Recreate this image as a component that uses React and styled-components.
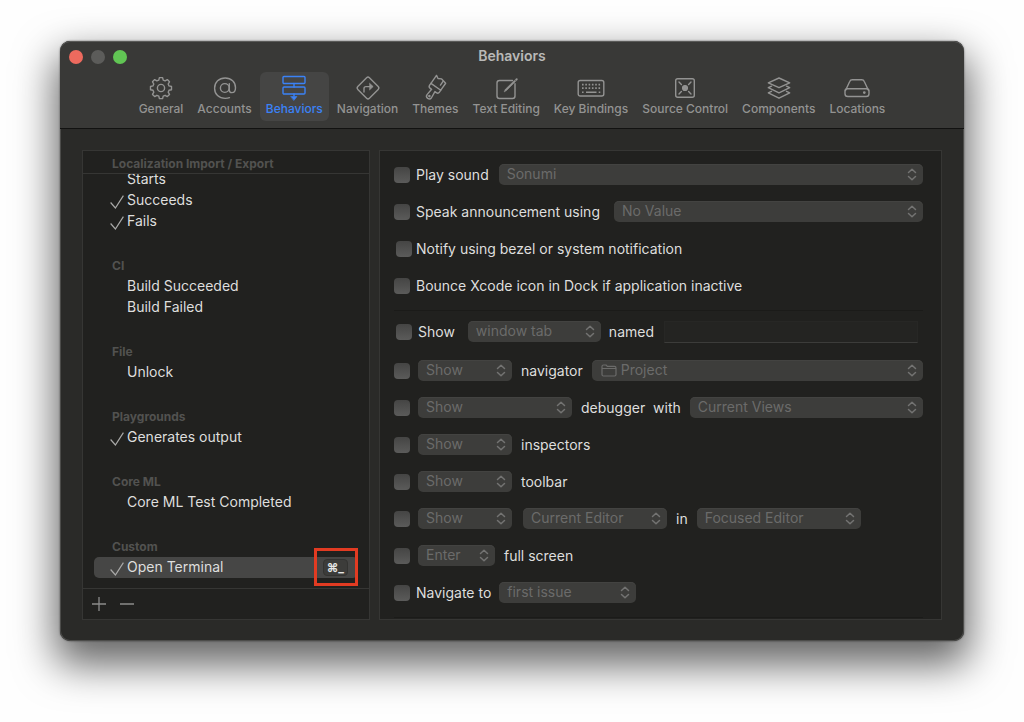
import React, { useState } from "react";
import styled, { createGlobalStyle, css } from "styled-components";

const GlobalStyle = createGlobalStyle`
  *, *::before, *::after {
    box-sizing: border-box;
  }

  body {
    margin: 0;
    background: #fefefe;
    font-family: Inter, "Liberation Sans", sans-serif;
    font-size: 14px;
  }

  button, select, input {
    font: inherit;
  }
`;

// Window
const Desktop = styled.div`
  min-height: 100vh;
  padding: 41px 60px 80px;
`;

const Window = styled.div`
  background: #2a2a28;
  border-radius: 10px;
  overflow: hidden;
  box-shadow:
    inset 0 0 0 1px #4c4c4a,
    0 0 2px rgba(0, 0, 0, 0.6),
    0 19px 40px 5px rgba(0, 0, 0, 0.6);
`;

const TitleArea = styled.header`
  background: #393937;
  border-bottom: 1px solid #121211;
  box-shadow: inset 0 1px 0 #5a5a58;
  border-radius: 10px 10px 0 0;
  padding-bottom: 7px;
`;

const TitleBar = styled.div`
  display: grid;
  grid-template-columns: 80px 1fr 80px;
  align-items: center;
  height: 31px;
`;

const Lights = styled.div`
  display: flex;
  gap: 8px;
  padding-left: 9px;
`;

const Light = styled.button`
  width: 14px;
  height: 14px;
  padding: 0;
  border: 0;
  border-radius: 50%;
  background: ${(props) => props.$color};
`;

const Title = styled.h1`
  margin: 0;
  padding-bottom: 2px;
  font-size: 14px;
  font-weight: 600;
  text-align: center;
  color: #b9b9b8;
`;

const Toolbar = styled.nav`
  display: flex;
  justify-content: center;
  gap: 2px;
`;

const Tab = styled.button`
  display: flex;
  flex-direction: column;
  align-items: center;
  height: 49px;
  padding: 2px 6px 3px;
  border: 0;
  border-radius: 6px;
  background: ${(props) => (props.$active ? "#454544" : "transparent")};
  color: ${(props) => (props.$active ? "#3b82f6" : "#939392")};
  font-size: 12px;
  font-weight: 500;
  line-height: 14px;
  white-space: nowrap;

  svg {
    width: 28px;
    height: 28px;
    fill: none;
    stroke: currentColor;
    stroke-width: 1.4;
    stroke-linecap: round;
    stroke-linejoin: round;
  }
`;

const Content = styled.main`
  display: flex;
  gap: 9px;
  padding: 21px 22px;
`;

// Event list
const panel = css`
  background: #21211f;
  border: 1px solid #363634;
`;

const Sidebar = styled.aside`
  ${panel}
  display: flex;
  flex-direction: column;
  flex: 0 0 288px;
`;

const StickyHeading = styled.h2`
  margin: 0;
  padding: 5px 0 1px 29px;
  border-bottom: 1px solid #363634;
  color: #525250;
  font-size: 12px;
  font-weight: 700;
  line-height: 16px;
`;

const EventList = styled.div`
  flex: 1;
  overflow: hidden;
  padding: 0 11px 10px;
`;

const Scrolled = styled.div`
  margin-top: -5px;
`;

const GroupHeading = styled.h2`
  margin: 0;
  padding: 26px 0 2px 18px;
  color: #525250;
  font-size: 12px;
  font-weight: 700;
  line-height: 16px;
`;

const EventRow = styled.div`
  position: relative;
  display: grid;
  grid-template-columns: 14px 1fr auto;
  column-gap: 3px;
  align-items: center;
  height: 21px;
  padding: 0 10px 0 16px;
  border-radius: 5px;
  background: ${(props) => (props.$selected ? "#464645" : "transparent")};
  color: #dededd;

  svg {
    width: 14px;
    height: 14px;
    margin-top: 2px;
    fill: none;
    stroke: #a9a9a8;
    stroke-width: 1.2;
  }
`;

const EventName = styled.span`
  grid-column: 2;
  padding-bottom: 2px;
  line-height: 19px;
`;

const Shortcut = styled.kbd`
  padding: 0 3px;
  border: 1px solid #333331;
  border-radius: 4px;
  background: #3c3c3a;
  color: #e6e6e5;
  font-family: Inter, "DejaVu Sans", sans-serif;
  font-size: 12px;
  font-weight: 700;
  line-height: 15px;
`;

const Highlight = styled.div`
  position: absolute;
  top: -9px;
  right: 0;
  width: 44px;
  height: 38px;
  border: 3px solid #e23b22;
`;

const SidebarFooter = styled.div`
  display: flex;
  gap: 12px;
  height: 31px;
  padding: 7px 8px;
  border-top: 1px solid #363634;
`;

const IconButton = styled.button`
  width: 16px;
  height: 16px;
  padding: 0;
  border: 0;
  background: none;
  color: #8c8c8b;

  svg {
    display: block;
    stroke: currentColor;
    stroke-width: 1.3;
  }
`;

// Actions
const Actions = styled.section`
  ${panel}
  flex: 1;
  min-width: 0;
  padding: 5px 18px 1px 14px;
`;

const Row = styled.div`
  display: flex;
  align-items: center;
  height: ${(props) => (props.$tall ? 41 : 37)}px;
  gap: ${(props) => props.$gap || 8}px;
  color: #dededd;
  white-space: nowrap;
`;

const CheckLabel = styled.label`
  display: flex;
  align-items: center;
  gap: ${(props) => (props.$wide ? 6 : 4)}px;
`;

const CheckSlot = styled.span`
  display: flex;
  justify-content: ${(props) => (props.$inset ? "flex-end" : "flex-start")};
  width: 18px;
`;

const Words = styled.span`
  padding: 0 ${(props) => (props.$spaced ? 3 : 0)}px 1px;
  word-break: keep-all;
`;

const Checkbox = styled.input`
  appearance: none;
  width: 16px;
  height: 16px;
  margin: 1px 0 0;
  border-radius: 4px;
  background: linear-gradient(#454544, #5b5b5a);

  &:checked {
    background: #3b82f6;
  }
`;

const Rule = styled.hr`
  margin: 6px 0 0;
  border: 0;
  border-top: 1px solid #1b1b19;
`;

const SelectBox = styled.span`
  position: relative;
  display: flex;
  flex: ${(props) => (props.$width ? `0 0 ${props.$width}px` : "1")};
  margin-left: ${(props) => props.$before || 0}px;
  color: #6b6b6a;

  svg {
    position: absolute;
    top: 4px;
    right: 6px;
    width: 10px;
    height: 13px;
    fill: none;
    stroke: #737372;
    stroke-width: 1.5;
    stroke-linecap: round;
    stroke-linejoin: round;
    pointer-events: none;
  }

  svg.leading {
    top: 4px;
    left: 9px;
    right: auto;
    width: 16px;
    height: 13px;
    stroke: #6b6b6a;
    stroke-width: 1.2;
  }
`;

const Select = styled.select`
  appearance: none;
  width: 100%;
  height: 21px;
  padding: 0 20px 2px ${(props) => (props.$icon ? 29 : 8)}px;
  border: 0;
  border-radius: 5px;
  background: #3d3d3b;
  box-shadow: inset 0 1px 0 #434341;
  color: inherit;
  opacity: 1;
`;

const NameField = styled.input`
  flex: 1;
  min-width: 0;
  height: 22px;
  margin: 0 5px 0 2px;
  border: 1px solid #272725;
  border-bottom-color: #3c3c3a;
  background: #242422;
  color: #dededd;
`;

const icons = {
  General: (
    <>
      <path d="M12.4 3.6h3.2l.6 2.5 1.9.8 2.2-1.3 2.2 2.2-1.3 2.2.8 1.9 2.5.6v3.2l-2.5.6-.8 1.9 1.3 2.2-2.2 2.2-2.2-1.3-1.9.8-.6 2.5h-3.2l-.6-2.5-1.9-.8-2.2 1.3-2.2-2.2 1.3-2.2-.8-1.9-2.5-.6v-3.2l2.5-.6.8-1.9-1.3-2.2 2.2-2.2 2.2 1.3 1.9-.8z" />
      <circle cx="14" cy="14" r="3.6" />
    </>
  ),
  Accounts: (
    <>
      <circle cx="13.8" cy="14" r="4.4" />
      <path d="M18.3 9.6v6.3c0 1.8.9 2.7 2.5 2.7 2.2 0 3.7-1.9 3.7-4.9 0-5.7-4.2-9.7-10.3-9.7C8 4 3.6 8.2 3.6 14.2c0 6.1 4.3 10.2 10.6 10.2 1.7 0 3.1-.2 4.3-.7" />
    </>
  ),
  Behaviors: (
    <>
      <rect x="3" y="2.500" width="22" height="7" rx="1" />
      <rect x="3" y="13" width="22" height="7" rx="1" />
      <path d="M14 9.500V13M14 20v2" />
      <path d="M11 22.500h6l-3 3.800z" fill="currentColor" strokeWidth="0.6" />
    </>
  ),
  Navigation: (
    <>
      <rect x="5.8" y="5.8" width="16.4" height="16.4" rx="2" transform="rotate(45 14 14)" />
      <path d="M10 18v-3.500c0-1.200.7-1.900 1.900-1.900H17" />
      <path d="M15.800 9.400l3.400 3.200-3.400 3.200z" fill="currentColor" strokeWidth="0.6" />
    </>
  ),
  Themes: (
    <g transform="rotate(35 14 14)">
      <path d="M8 12.500V2.800l3 1.700L14 2.800l6 1.200v8.500z" />
      <path d="M8 12.500v2.300c0 1.500 1 2.200 2.300 2.200h1.700l-.7 7c0 3.600 5.400 3.600 5.400 0l-.7-7h1.700c1.300 0 2.300-.7 2.300-2.200v-2.300" />
      <path d="M16.800 4v4.500" />
      <circle cx="14" cy="23.800" r=".6" />
    </g>
  ),
  "Text Editing": (
    <>
      <path d="M20.500 6.500H7.500C6 6.500 5 7.500 5 9v13c0 1.500 1 2.500 2.500 2.500h13c1.500 0 2.500-1 2.500-2.500V9.800" />
      <path d="M12.300 17.600l1.100-2.300L22.600 6.200l1.100 1.100-9.200 9.200z" fill="currentColor" strokeWidth="0.6" />
      <path d="M24.200 5.700l.5-.5" strokeWidth="2" />
    </>
  ),
  "Key Bindings": (
    <>
      <rect x="1.2" y="6.500" width="25.6" height="15.5" rx="2" />
      <path d="M5 10.600h18.500M5 14.200h18.500" strokeWidth="1.8" strokeDasharray="1.6 1.7" strokeLinecap="butt" />
      <path d="M5 18.200h1.600M9 18.200h10.500M21.700 18.200h1.600" strokeWidth="1.6" strokeLinecap="butt" />
    </>
  ),
  "Source Control": (
    <>
      <rect x="4.7" y="4.7" width="18.6" height="18.6" rx="2" />
      <circle cx="14" cy="14" r="2.4" fill="currentColor" />
      <path d="M8 8l2.400 2.400M20 8l-2.400 2.400M8 20l2.400-2.400M20 20l-2.400-2.400" />
    </>
  ),
  Components: (
    <>
      <path d="M14 4l10.700 4.800L14 13.700 3.300 8.800z" />
      <path d="M6.500 12.200l-3.200 1.500L14 18.800l10.700-5.100-3.200-1.500" />
      <path d="M6.500 17.300l-3.200 1.500L14 24.200l10.700-5.400-3.200-1.500" />
    </>
  ),
  Locations: (
    <>
      <path d="M2.500 16.500L6.600 7.700c.5-1.200 1.300-1.900 2.700-1.900h9.400c1.400 0 2.200.7 2.700 1.900l4.100 8.800" />
      <path d="M4.600 14.700h18.800c1.500 0 2.600 1 2.600 2.400v2.600c0 1.700-1.100 2.800-2.800 2.800H4.800C3.100 22.500 2 21.400 2 19.700v-2.600c0-1.400 1.100-2.400 2.600-2.400z" />
      <circle cx="21.300" cy="18.600" r=".7" fill="currentColor" />
    </>
  ),
};

const groups = [
  {
    items: [
      { name: "Starts" },
      { name: "Succeeds", checked: true },
      { name: "Fails", checked: true },
    ],
  },
  { title: "CI", items: [{ name: "Build Succeeded" }, { name: "Build Failed" }] },
  { title: "File", items: [{ name: "Unlock" }] },
  { title: "Playgrounds", items: [{ name: "Generates output", checked: true }] },
  { title: "Core ML", items: [{ name: "Core ML Test Completed" }] },
  {
    title: "Custom",
    items: [{ name: "Open Terminal", checked: true, shortcut: "⌘_" }],
  },
];

function Check({ label, inset, wide, children }) {
  return (
    <CheckLabel $wide={wide}>
      <CheckSlot $inset={inset}>
        <Checkbox type="checkbox" aria-label={label} />
      </CheckSlot>
      {children && <Words>{children}</Words>}
    </CheckLabel>
  );
}

function Popup({ label, value, width, before, folder }) {
  return (
    <SelectBox $width={width} $before={before}>
      {folder && (
        <svg className="leading" viewBox="0 0 16 13">
          <path d="M1 4.500h14M1 10.500v-8c0-1 .5-1.500 1.500-1.500H5l1.300 1.400h7.200c1 0 1.500.5 1.500 1.500v6.600c0 1-.5 1.500-1.500 1.500h-11c-1 0-1.500-.5-1.500-1.500z" />
        </svg>
      )}
      <Select aria-label={label} $icon={folder} disabled>
        <option>{value}</option>
      </Select>
      <svg viewBox="0 0 10 13">
        <path d="M1.500 4.500L5 1.200l3.500 3.300M1.500 8.500L5 11.800l3.500-3.300" />
      </svg>
    </SelectBox>
  );
}

function App() {
  const [active, setActive] = useState("Behaviors");

  return (
    <>
      <GlobalStyle />
      <Desktop>
        <Window>
          <TitleArea>
            <TitleBar>
              <Lights>
                <Light $color="#ed6a5e" aria-label="Close" />
                <Light $color="#5c5c5a" aria-label="Minimize" />
                <Light $color="#61c554" aria-label="Zoom" />
              </Lights>
              <Title>Behaviors</Title>
            </TitleBar>
            <Toolbar>
              {Object.keys(icons).map((name) => (
                <Tab
                  key={name}
                  $active={name === active}
                  onClick={() => setActive(name)}
                >
                  <svg viewBox="0 0 28 28">{icons[name]}</svg>
                  {name}
                </Tab>
              ))}
            </Toolbar>
          </TitleArea>

          <Content>
            <Sidebar>
              <StickyHeading>Localization Import / Export</StickyHeading>
              <EventList>
                <Scrolled>
                  {groups.map((group, index) => (
                    <div key={index}>
                      {group.title && <GroupHeading>{group.title}</GroupHeading>}
                      {group.items.map((item) => (
                        <EventRow key={item.name} $selected={!!item.shortcut}>
                          {item.checked && (
                            <svg viewBox="0 0 14 14">
                              <path d="M.6 7.500L5.400 13 13.400.6" />
                            </svg>
                          )}
                          <EventName>{item.name}</EventName>
                          {item.shortcut && <Shortcut>{item.shortcut}</Shortcut>}
                          {item.shortcut && <Highlight />}
                        </EventRow>
                      ))}
                    </div>
                  ))}
                </Scrolled>
              </EventList>
              <SidebarFooter>
                <IconButton aria-label="Add behavior">
                  <svg viewBox="0 0 16 16">
                    <path d="M1 8h14M8 1v14" />
                  </svg>
                </IconButton>
                <IconButton aria-label="Remove behavior">
                  <svg viewBox="0 0 16 16">
                    <path d="M1 8h14" />
                  </svg>
                </IconButton>
              </SidebarFooter>
            </Sidebar>

            <Actions>
              <Row $gap={10}>
                <Check>Play sound</Check>
                <Popup label="Sound" value="Sonumi" />
              </Row>
              <Row $gap={14}>
                <Check>Speak announcement using</Check>
                <Popup label="Voice" value="No Value" />
              </Row>
              <Row>
                <Check inset>Notify using bezel or system notification</Check>
              </Row>
              <Row>
                <Check>Bounce Xcode icon in Dock if application inactive</Check>
              </Row>
              <Rule />
              <Row $tall>
                <Check inset wide>
                  Show
                </Check>
                <Popup label="Tab or window" value="window tab" width={133} before={5} />
                <Words as="label" htmlFor="tab-name">
                  named
                </Words>
                <NameField id="tab-name" />
              </Row>
              <Row $gap={6}>
                <Check label="Navigator" />
                <Popup label="Navigator action" value="Show" width={94} />
                <Words $spaced>navigator</Words>
                <Popup label="Navigator kind" value="Project" folder />
              </Row>
              <Row $gap={6}>
                <Check label="Debugger" />
                <Popup label="Debugger action" value="Show" width={154} />
                <Words $spaced>debugger&nbsp; with</Words>
                <Popup label="Debugger views" value="Current Views" />
              </Row>
              <Row $gap={6}>
                <Check label="Inspectors" />
                <Popup label="Inspectors action" value="Show" width={94} />
                <Words $spaced>inspectors</Words>
              </Row>
              <Row $gap={6}>
                <Check label="Toolbar" />
                <Popup label="Toolbar action" value="Show" width={94} />
                <Words $spaced>toolbar</Words>
              </Row>
              <Row $gap={6}>
                <Check label="Editor" />
                <Popup label="Editor action" value="Show" width={94} />
                <Popup label="Editor kind" value="Current Editor" width={144} before={5} />
                <Words $spaced>in</Words>
                <Popup label="Editor place" value="Focused Editor" width={164} />
              </Row>
              <Row $gap={6}>
                <Check label="Full screen" />
                <Popup label="Full screen action" value="Enter" width={77} />
                <Words $spaced>full screen</Words>
              </Row>
              <Row>
                <Check>Navigate to</Check>
                <Popup label="Navigate to" value="first issue" width={137} />
              </Row>
              <Rule />
            </Actions>
          </Content>
        </Window>
      </Desktop>
    </>
  );
}

export default App;
